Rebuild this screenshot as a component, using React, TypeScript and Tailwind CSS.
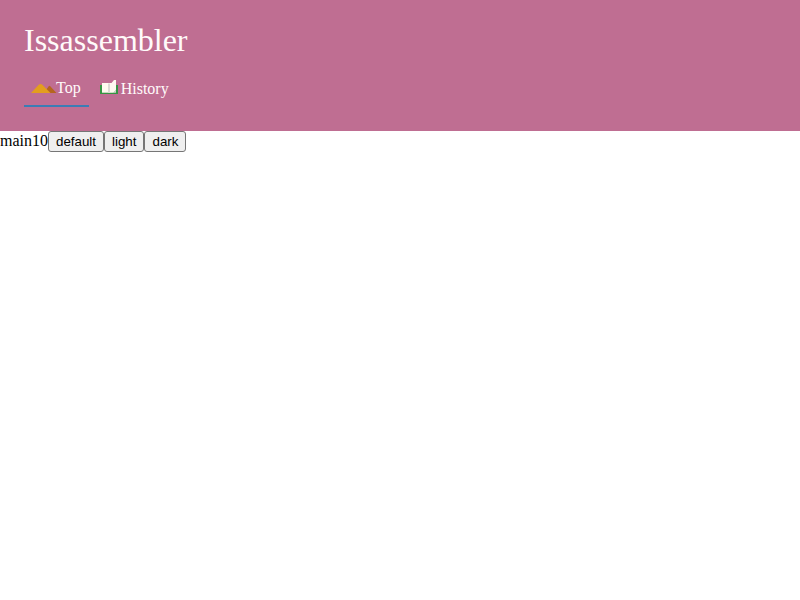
const MountainIcon = () => (
  <svg className="block h-[18px] w-6 overflow-visible" viewBox="0 0 24 18">
    <path d="M12 14L16.5 7.5Q17.5 6.2 18.5 7.5L24.5 14Z" fill="#b56520" />
    <path d="M-1 14L7 5.6Q8.5 4.2 10 5.6L18.5 14Z" fill="#e39e1e" />
  </svg>
);

const BookIcon = () => (
  <svg className="block h-[18px] w-[18px]" viewBox="0 0 18 18">
    <path d="M0 5H18V14H0Z" fill="#369544" />
    <path d="M2 3H9V12.7H2Z" fill="#fffaf0" />
    <path d="M9 3H11.5L14 0H16V10L13.5 12.7H9Z" fill="#fffaf0" />
    <path d="M8 3.5H10V12.7H8Z" fill="#dcdad4" />
    <path d="M13.5 12.7L16 9.5V12.7Z" fill="#d4d4d0" />
  </svg>
);

const themes = ["default", "light", "dark"];

export default function App() {
  return (
    <div className="min-h-screen bg-white font-['Liberation_Serif',serif] text-base leading-[18px] text-black">
      <header className="h-[131px] bg-[#bf6e92] px-6 pt-[22px] text-[#fffafa]">
        <h1 className="text-[32px] leading-9">Issassembler</h1>
        <nav className="mt-[13px] flex items-start">
          <a className="flex h-9 border-b-2 border-[#3a7db5] px-2 pt-2">
            <MountainIcon />
            <span>Top</span>
          </a>
          <a className="flex pt-[9px] pl-[11px]">
            <BookIcon />
            <span className="ml-[3px]">History</span>
          </a>
        </nav>
      </header>
      <main className="flex items-start">
        <span className="pt-px">main10</span>
        {themes.map((theme) => (
          <button
            key={theme}
            className="h-[21px] rounded-[3px] border border-[#767676] bg-[#efefef] px-[7px] font-['Liberation_Sans',sans-serif] text-[13.333px] leading-[19px]"
          >
            {theme}
          </button>
        ))}
      </main>
    </div>
  );
}
